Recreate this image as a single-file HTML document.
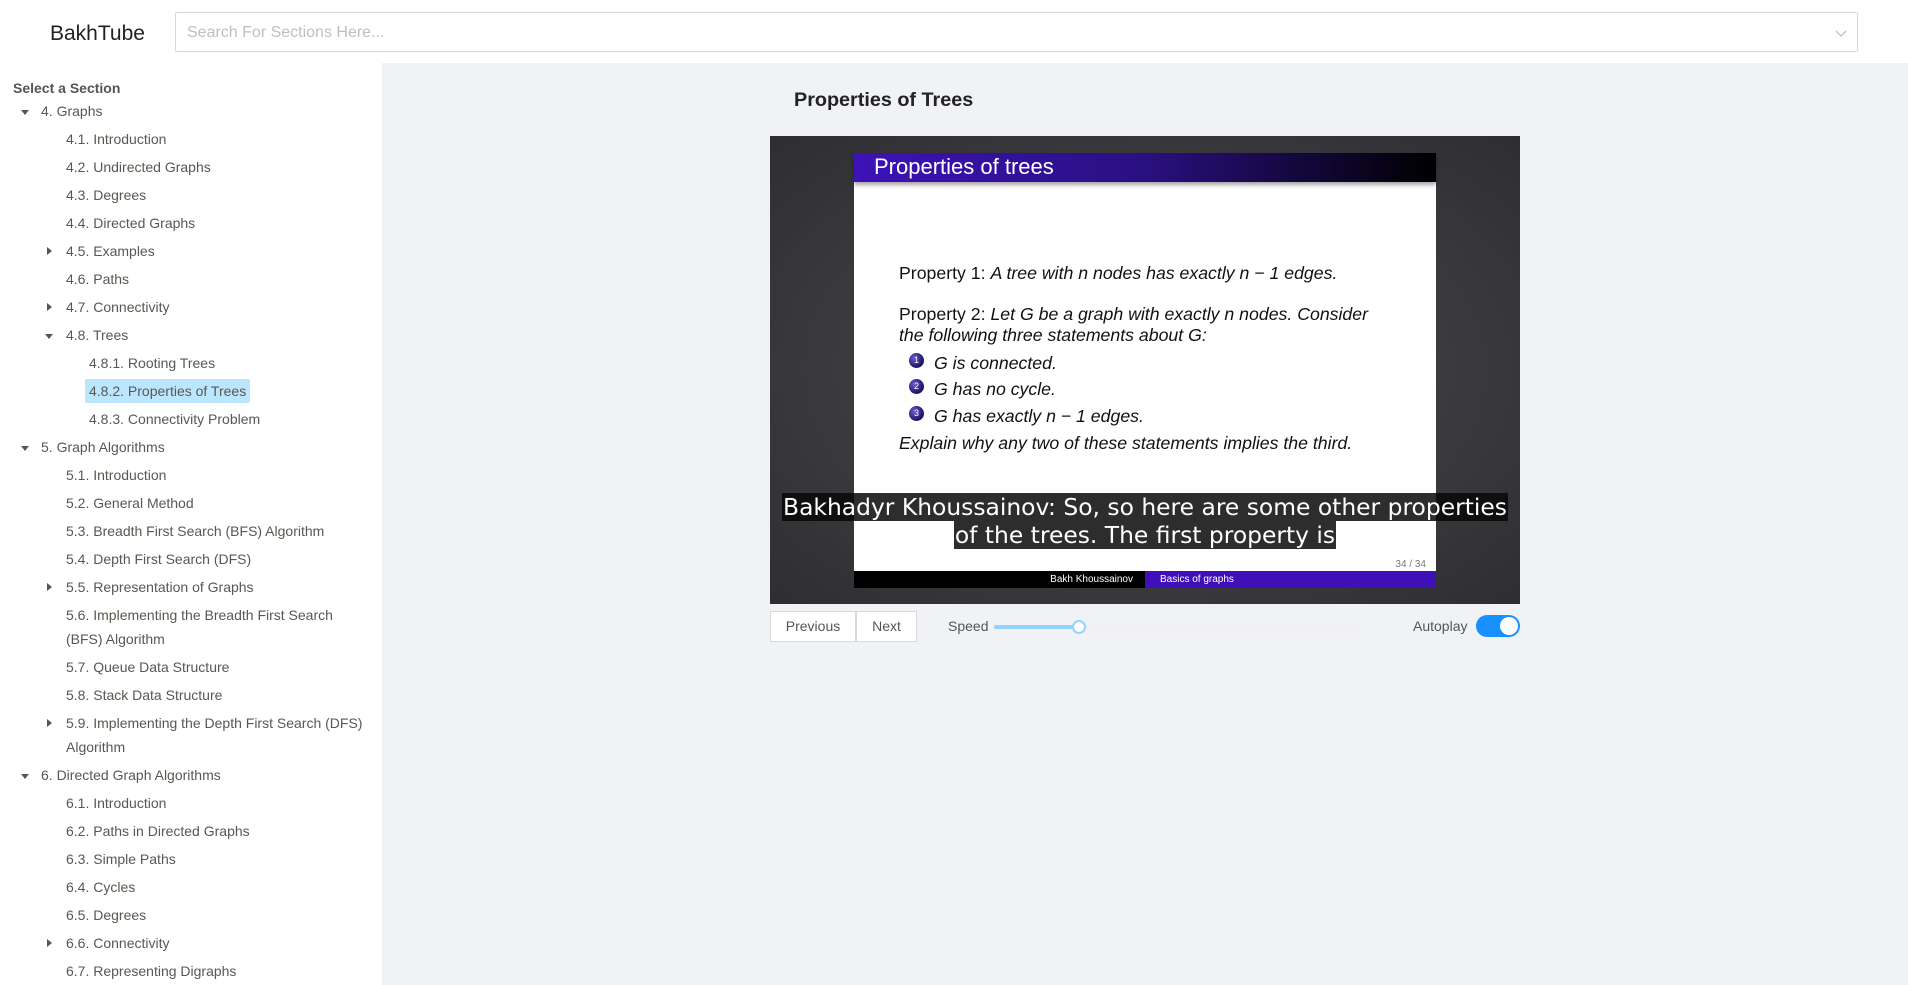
<!DOCTYPE html>
<html><head><meta charset="utf-8"><style>
*{box-sizing:border-box;margin:0;padding:0}
body{width:1908px;height:985px;overflow:hidden;font-family:"Liberation Sans",Arial,sans-serif;background:#f0f2f5;position:relative}
.hdr{position:absolute;left:0;top:0;width:1908px;height:63px;background:#fff}
.logo{position:absolute;left:50px;top:22px;font-size:21px;color:#222}
.search{position:absolute;left:175px;top:12px;width:1683px;height:40px;border:1px solid #d9d9d9;border-radius:2px;background:#fff}
.search span{position:absolute;left:11px;top:11px;font-size:16px;color:#bfbfbf}
.search svg{position:absolute;right:10px;top:14px}
.side{position:absolute;left:0;top:63px;width:382px;height:922px;background:#fff;overflow:hidden}
.sel{position:absolute;left:13px;top:17px;font-size:14px;font-weight:bold;color:#555}
ul{list-style:none;position:absolute;left:0;top:34px;width:382px}
li{position:relative;font-size:14px;color:#5c5650;line-height:24px;padding:2px 0}
li.l1{padding-left:41px}
li.l2{padding-left:66px;padding-right:18px}
li.l3{padding-left:89px}
li .t{display:inline-block}
li.hl .t{background:#bae7ff;border-radius:2px;padding:0 4px;margin-left:-4px}
.dn::before{content:"";position:absolute;top:13px;border-left:4px solid transparent;border-right:4px solid transparent;border-top:5px solid #555}
.rt::before{content:"";position:absolute;top:10px;border-top:4px solid transparent;border-bottom:4px solid transparent;border-left:5px solid #555}
li.l1.dn::before{left:21px}
li.l2.dn::before{left:45px}
li.l2.rt::before{left:47px}
h2{position:absolute;left:794px;top:89px;font-size:19.8px;font-weight:bold;color:#222}
.vid{position:absolute;left:770px;top:136px;width:750px;height:468px;background:radial-gradient(ellipse at center,#4a4a50 0%,#3a3a3e 60%,#2e2e32 100%);overflow:hidden}
.slide{position:absolute;left:84px;top:17px;width:582px;height:435px;background:#fff;font-family:"Liberation Sans",sans-serif;color:#111}
.stitle{position:absolute;left:0;top:0;width:582px;height:29px;background:linear-gradient(90deg,#3d12b8 0%,#2a0f80 50%,#000 100%);color:#fff;font-size:22px;padding-left:20px;line-height:27px;box-shadow:0 3px 4px rgba(0,0,0,.35)}
.sl{position:absolute;font-size:17.7px;white-space:nowrap}
.sl i{font-style:italic}
.bul{position:absolute;left:55px;width:15px;height:15px;border-radius:50%;background:radial-gradient(circle at 35% 35%,#6a5bd0,#1a1060 70%);color:#fff;font-size:9px;text-align:center;line-height:15px}
.foot{position:absolute;left:0;top:418px;width:582px;height:17px;font-size:10px;color:#fff;line-height:17px}
.fl{position:absolute;left:0;top:0;width:291px;height:17px;background:#000;text-align:right;padding-right:12px}
.fr{position:absolute;left:291px;top:0;width:291px;height:17px;background:#3f10b8;padding-left:15px}
.pg{position:absolute;right:10px;top:406px;font-size:10px;color:#777}
.sub{position:absolute;left:0;width:750px;text-align:center;font-family:"DejaVu Sans",sans-serif;font-size:23.4px;color:#fff;line-height:28px}
.sub span{background:rgba(8,8,8,.85);padding:0 1px}
.btn{position:absolute;top:611px;height:31px;border:1px solid #d9d9d9;background:#fff;font-size:14px;color:#555;text-align:center;line-height:29px}
.lbl{position:absolute;top:618px;font-size:14px;color:#555}
.track{position:absolute;left:994px;top:625px;width:369px;height:4px;background:#f0f0f0;border-radius:2px}
.fill{position:absolute;left:994px;top:625px;width:84px;height:4px;background:#91d5ff;border-radius:2px}
.thumb{position:absolute;left:1072px;top:620px;width:14px;height:14px;border:2px solid #91d5ff;background:#fff;border-radius:50%}
.tog{position:absolute;left:1476px;top:615px;width:44px;height:22px;background:#1890ff;border-radius:11px}
.tog::after{content:"";position:absolute;right:2px;top:2px;width:18px;height:18px;background:#fff;border-radius:50%}
</style></head><body>
<div class="hdr"><div class="logo">BakhTube</div>
<div class="search"><span>Search For Sections Here...</span><svg width="12" height="12" viewBox="0 0 12 12"><path d="M1 4l5 5 5-5" fill="none" stroke="#bfbfbf" stroke-width="1.3"/></svg></div></div>
<div class="side"><div class="sel">Select a Section</div>
<ul>
<li class="l1 dn"><span class="t">4. Graphs</span></li>
<li class="l2"><span class="t">4.1. Introduction</span></li>
<li class="l2"><span class="t">4.2. Undirected Graphs</span></li>
<li class="l2"><span class="t">4.3. Degrees</span></li>
<li class="l2"><span class="t">4.4. Directed Graphs</span></li>
<li class="l2 rt"><span class="t">4.5. Examples</span></li>
<li class="l2"><span class="t">4.6. Paths</span></li>
<li class="l2 rt"><span class="t">4.7. Connectivity</span></li>
<li class="l2 dn"><span class="t">4.8. Trees</span></li>
<li class="l3"><span class="t">4.8.1. Rooting Trees</span></li>
<li class="l3 hl"><span class="t">4.8.2. Properties of Trees</span></li>
<li class="l3"><span class="t">4.8.3. Connectivity Problem</span></li>
<li class="l1 dn"><span class="t">5. Graph Algorithms</span></li>
<li class="l2"><span class="t">5.1. Introduction</span></li>
<li class="l2"><span class="t">5.2. General Method</span></li>
<li class="l2"><span class="t">5.3. Breadth First Search (BFS) Algorithm</span></li>
<li class="l2"><span class="t">5.4. Depth First Search (DFS)</span></li>
<li class="l2 rt"><span class="t">5.5. Representation of Graphs</span></li>
<li class="l2"><span class="t">5.6. Implementing the Breadth First Search (BFS) Algorithm</span></li>
<li class="l2"><span class="t">5.7. Queue Data Structure</span></li>
<li class="l2"><span class="t">5.8. Stack Data Structure</span></li>
<li class="l2 rt"><span class="t">5.9. Implementing the Depth First Search (DFS) Algorithm</span></li>
<li class="l1 dn"><span class="t">6. Directed Graph Algorithms</span></li>
<li class="l2"><span class="t">6.1. Introduction</span></li>
<li class="l2"><span class="t">6.2. Paths in Directed Graphs</span></li>
<li class="l2"><span class="t">6.3. Simple Paths</span></li>
<li class="l2"><span class="t">6.4. Cycles</span></li>
<li class="l2"><span class="t">6.5. Degrees</span></li>
<li class="l2 rt"><span class="t">6.6. Connectivity</span></li>
<li class="l2"><span class="t">6.7. Representing Digraphs</span></li>
</ul></div>
<h2>Properties of Trees</h2>
<div class="vid">
<div class="slide">
<div class="stitle">Properties of trees</div>
<div class="sl" style="left:45px;top:110px">Property 1: <i>A tree with n nodes has exactly n − 1 edges.</i></div>
<div class="sl" style="left:45px;top:151px">Property 2: <i>Let G be a graph with exactly n nodes. Consider</i></div>
<div class="sl" style="left:45px;top:172px"><i>the following three statements about G:</i></div>
<div class="bul" style="top:200px">1</div><div class="sl" style="left:80px;top:200px"><i>G is connected.</i></div>
<div class="bul" style="top:226px">2</div><div class="sl" style="left:80px;top:226px"><i>G has no cycle.</i></div>
<div class="bul" style="top:253px">3</div><div class="sl" style="left:80px;top:253px"><i>G has exactly n − 1 edges.</i></div>
<div class="sl" style="left:45px;top:280px"><i>Explain why any two of these statements implies the third.</i></div>
<div class="pg">34 / 34</div>
<div class="foot"><div class="fl">Bakh Khoussainov</div><div class="fr">Basics of graphs</div></div>
</div>
<div class="sub" style="top:357px"><span>Bakhadyr Khoussainov: So, so here are some other properties</span></div>
<div class="sub" style="top:385px"><span>of the trees. The first property is</span></div>
</div>
<div class="btn" style="left:770px;width:86px">Previous</div>
<div class="btn" style="left:856px;width:61px">Next</div>
<div class="lbl" style="left:948px">Speed</div>
<div class="track"></div><div class="fill"></div><div class="thumb"></div>
<div class="lbl" style="left:1413px">Autoplay</div>
<div class="tog"></div>
</body></html>
